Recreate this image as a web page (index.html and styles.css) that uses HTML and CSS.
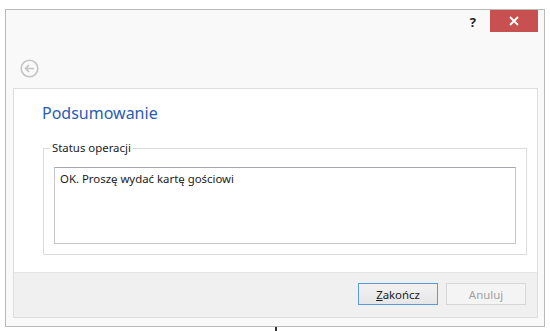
FILE: index.html
```html
<!DOCTYPE html>
<html lang="pl">

<head>
    <meta charset="UTF-8">
    <meta name="viewport" content="width=device-width, initial-scale=1.0">
    <title>Podsumowanie</title>

    <link rel="stylesheet" href="styles.css">
</head>

<body>
    <div class="window">
        <!-- Pasek tytułu -->
        <div class="titlebar">
            <span class="help">?</span>
            <div class="close">
                <svg width="10" height="10" viewBox="0 0 10 10">
                    <path d="M1 1 L9 9 M9 1 L1 9" stroke="#fff" stroke-width="1.8" fill="none"/>
                </svg>
            </div>
        </div>

        <!-- Przycisk wstecz -->
        <div class="nav">
            <svg width="19" height="19" viewBox="0 0 19 19">
                <circle cx="9.5" cy="9.5" r="8.3" stroke="#c4c4c4" stroke-width="1.6" fill="none"/>
                <path d="M14 9.5 H5.5 M9 6 L5.5 9.5 L9 13" stroke="#c4c4c4" stroke-width="1.6" fill="none"/>
            </svg>
        </div>

        <div class="panel">
            <div class="content">
                <h1 class="title">Podsumowanie</h1>

                <fieldset class="group">
                    <legend>Status operacji</legend>
                    <div class="textbox">OK. Proszę wydać kartę gościowi</div>
                </fieldset>
            </div>

            <div class="footer">
                <button class="btn btn-default"><u>Z</u>akończ</button>
                <button class="btn" disabled>Anuluj</button>
            </div>
        </div>
    </div>
    <div class="tick"></div>
</body>

</html>
```

FILE: styles.css
```css
body {
    margin: 0;
    background-color: #fff;
    font-family: "Noto Sans", "Open Sans", sans-serif;
    font-size: 11.4px;
    color: #1a1a1a;
}

.window {
    margin: 9px 0 0 5px;
    width: 540px;
    height: 318px;
    box-sizing: border-box;
    border: 1px solid #b9b9b9;
    background-color: #f9f9f9;
    display: flex;
    flex-direction: column;
}

.titlebar {
    height: 22px;
    display: flex;
    justify-content: flex-end;
    align-items: center;
    padding-right: 6px;
}

.help {
    font-weight: bold;
    font-size: 13px;
    color: #222;
    margin-right: 14px;
    margin-top: 1px;
}

.close {
    width: 48px;
    height: 22px;
    background-color: #c75050;
    display: flex;
    align-items: center;
    justify-content: center;
}

.nav {
    height: 56px;
    box-sizing: border-box;
    padding: 27px 0 0 14px;
}

.panel {
    flex: 1;
    margin: 0 6px 8px 7px;
    border: 1px solid #dedede;
    background-color: #fff;
    display: flex;
    flex-direction: column;
}

.content {
    flex: 1;
    padding: 13px 10px 0 28px;
}

.title {
    margin: 0;
    font-size: 16px;
    font-weight: normal;
    line-height: 22px;
    color: #2a5cb3;
}

.group {
    margin: 16px 0 0 1px;
    padding: 0 10px 10px 10px;
    border: 1px solid #dcdcdc;
    box-shadow: inset 1px 1px 0 #fff;
}

.group legend {
    margin-left: -4px;
    padding: 0 2px;
    line-height: 16px;
}

.textbox {
    margin-top: 11px;
    height: 77px;
    box-sizing: border-box;
    border: 1px solid #c4c6cc;
    border-top-color: #a6a8b0;
    padding: 3px 5px;
    line-height: 16px;
    background-color: #fff;
}

.footer {
    height: 45px;
    box-sizing: border-box;
    border-top: 1px solid #e6e6e6;
    background-color: #f0f0f0;
    display: flex;
    justify-content: flex-end;
    align-items: flex-start;
    gap: 8px;
    padding: 10px 11px 0 0;
}

.btn {
    width: 80px;
    height: 22px;
    font-family: inherit;
    font-size: 11.4px;
    padding: 0;
    border: 1px solid #d6d6d6;
    background-color: #f4f4f4;
    color: #a2a2a2;
}

.btn-default {
    border-color: #5a9ad8;
    background: linear-gradient(#f2f2f2, #e6e6e6);
    color: #1a1a1a;
}

.tick {
    margin-left: 275px;
    width: 2px;
    height: 5px;
    background-color: #333;
}
```
